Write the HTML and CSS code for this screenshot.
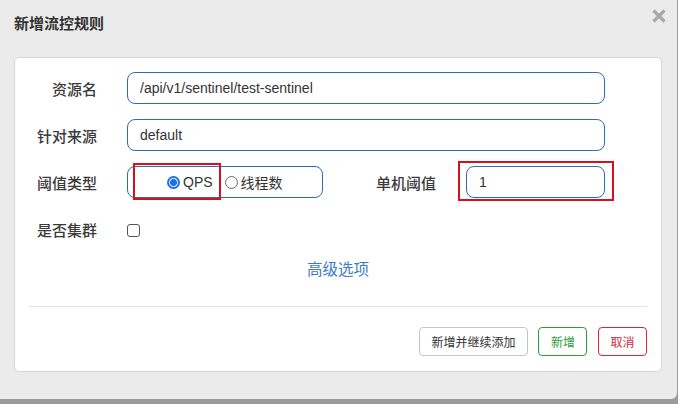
FILE: index.html
```html
<!DOCTYPE html>
<html lang="zh-CN">
<head>
<meta charset="utf-8">
<title>新增流控规则</title>
<link rel="stylesheet" href="styles.css">
</head>
<body>
<div class="dialog">
  <div class="dialog-header">
    <h4 class="dialog-title">新增流控规则</h4>
    <span class="close" aria-label="关闭">
      <svg width="14" height="14" viewBox="0 0 14 14"><path d="M1.5 1.5 L12.5 12.5 M12.5 1.5 L1.5 12.5" stroke="#a9a9a9" stroke-width="3.2" fill="none"/></svg>
    </span>
  </div>
  <div class="panel">
    <div class="form-row">
      <label class="label">资源名</label>
      <div class="input input-wide">/api/v1/sentinel/test-sentinel</div>
    </div>
    <div class="form-row">
      <label class="label">针对来源</label>
      <div class="input input-wide">default</div>
    </div>
    <div class="form-row">
      <label class="label">阈值类型</label>
      <div class="radio-group">
        <span class="mark mark-radio"></span>
        <label class="radio"><span class="radio-dot checked"></span>QPS</label>
        <label class="radio"><span class="radio-dot"></span>线程数</label>
      </div>
      <label class="label label-second">单机阈值</label>
      <div class="input-wrap">
        <span class="mark mark-input"></span>
        <div class="input input-small">1</div>
      </div>
    </div>
    <div class="form-row">
      <label class="label">是否集群</label>
      <span class="checkbox"></span>
    </div>
    <div class="advanced">高级选项</div>
    <hr class="divider">
    <div class="actions">
      <button class="btn btn-default">新增并继续添加</button>
      <button class="btn btn-success">新增</button>
      <button class="btn btn-danger">取消</button>
    </div>
  </div>
</div>
</body>
</html>
```
FILE: styles.css
```css
html, body {
  margin: 0;
  padding: 0;
}
body {
  background: #9b9b9b;
  font-family: "Liberation Sans", "Noto Sans CJK SC", sans-serif;
  color: #333;
  width: 678px;
  height: 404px;
  overflow: hidden;
}
.dialog {
  width: 677px;
  height: 399px;
  background: #ebebeb;
  border-bottom-right-radius: 6px;
  box-sizing: border-box;
}
.dialog-header {
  height: 57px;
  box-sizing: border-box;
  padding: 14px 11px 0 14px;
  display: flex;
  justify-content: space-between;
  align-items: flex-start;
}
.dialog-title {
  margin: 0;
  font-family: "Noto Sans CJK SC", sans-serif;
  font-size: 15px;
  line-height: 18px;
  font-weight: 700;
  color: #333;
}
.close {
  margin-top: -5px;
  display: block;
  width: 14px;
  height: 14px;
}
.close svg { display: block; }
.panel {
  margin: 0 15px 0 14px;
  background: #fff;
  border: 1px solid #d6d6d6;
  border-radius: 5px;
  padding: 14px 14px 15px;
  height: 315px;
  box-sizing: border-box;
}
.form-row {
  display: flex;
  align-items: center;
  height: 32px;
  margin-bottom: 15px;
}
.form-row:nth-child(4) { margin-bottom: 0; }
.label {
  width: 68px;
  margin-right: 30px;
  text-align: right;
  font-family: "Noto Sans CJK SC", sans-serif;
  font-size: 15px;
  font-weight: 500;
  color: #3a3a3a;
  flex-shrink: 0;
}
.label-second {
  width: 113px;
}
.input {
  height: 32px;
  box-sizing: border-box;
  border: 1px solid #2f6db3;
  border-radius: 8px;
  padding: 0 12px;
  font-size: 14px;
  line-height: 30px;
  color: #333;
}
.input-wide { width: 478px; }
.input-small { width: 139px; }
.input-wrap { position: relative; }
.radio-group {
  position: relative;
  width: 196px;
  height: 32px;
  box-sizing: border-box;
  border: 1px solid #2f6db3;
  border-radius: 8px;
  padding-left: 39px;
  display: flex;
  align-items: center;
  font-size: 14px;
}
.radio {
  display: flex;
  align-items: center;
  margin-right: 12px;
  font-family: "Liberation Sans", "Noto Sans CJK SC", sans-serif;
  color: #333;
}
.radio-dot {
  width: 13px;
  height: 13px;
  box-sizing: border-box;
  border: 1px solid #666;
  border-radius: 50%;
  margin-right: 3px;
  background: #fff;
}
.radio-dot.checked {
  border: 2px solid #1a6ef0;
  background: radial-gradient(circle, #1a6ef0 0 3.2px, #fff 3.8px);
}
.mark {
  position: absolute;
  border: 2px solid #d8101e;
  box-sizing: border-box;
  pointer-events: none;
}
.mark-radio {
  left: 5px;
  top: -4px;
  width: 88px;
  height: 37px;
}
.mark-input {
  left: -8px;
  top: -5px;
  width: 156px;
  height: 40px;
}
.checkbox {
  width: 13px;
  height: 13px;
  box-sizing: border-box;
  border: 1px solid #555;
  border-radius: 3px;
  margin-top: 3px;
  background: #fff;
}
.advanced {
  margin-top: 15px;
  text-align: center;
  font-family: "Noto Sans CJK SC", sans-serif;
  font-size: 15.5px;
  line-height: 16px;
  color: #3d7cc4;
}
.divider {
  margin: 30px 0 0;
  border: 0;
  border-top: 1px solid #e2e2e2;
  height: 0;
}
.actions {
  margin-top: 20px;
  display: flex;
  justify-content: flex-end;
  gap: 10.5px;
}
.btn {
  height: 29px;
  padding: 0 11.5px;
  border-radius: 4px;
  background: #fff;
  font-family: "Noto Sans CJK SC", sans-serif;
  font-size: 12px;
  line-height: 27px;
  cursor: pointer;
}
.btn-default { border: 1px solid #c4c4c4; color: #333; }
.btn-success { border: 1px solid #2a9d3a; color: #2a9d3a; }
.btn-danger { border: 1px solid #d9253a; color: #d9253a; }
```
